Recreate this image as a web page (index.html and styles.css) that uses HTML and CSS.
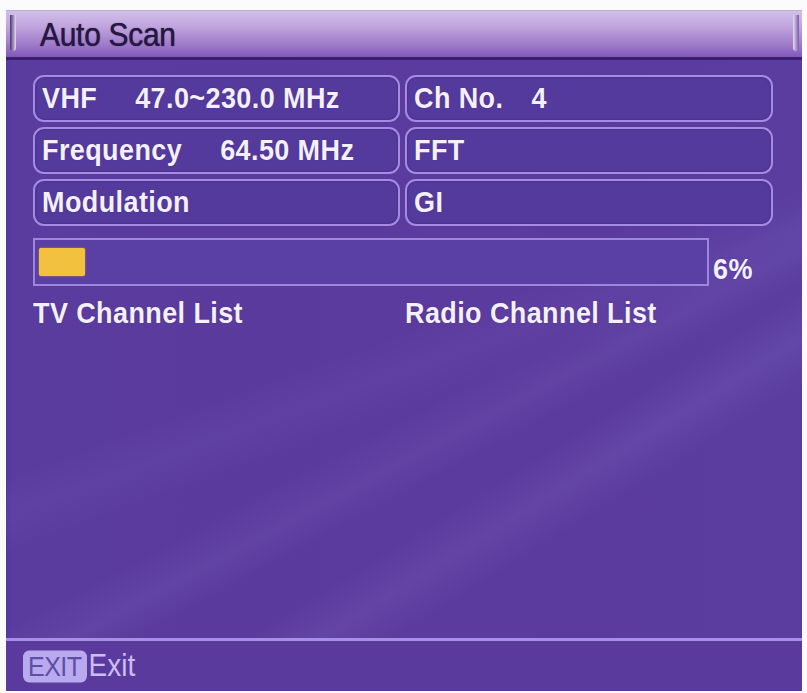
FILE: index.html
```html
<!DOCTYPE html>
<html lang="en">
<head>
<meta charset="UTF-8" />
<meta name="viewport" content="width=device-width, initial-scale=1" />
<title>Auto Scan</title>
<link rel="stylesheet" href="styles.css">
</head>
<body>

<div class="screen">
  <!-- Title bar -->
  <header class="titlebar">
    <span class="cap cap-left"></span>
    <h1>Auto Scan</h1>
    <span class="cap cap-right"></span>
  </header>

  <main class="content">
    <div class="info-grid">
      <div class="field"><span class="txt">VHF</span><span class="txt val-vhf">47.0~230.0 MHz</span></div>
      <div class="field"><span class="txt">Ch No.</span><span class="txt val-ch">4</span></div>
      <div class="field"><span class="txt">Frequency</span><span class="txt val-freq">64.50 MHz</span></div>
      <div class="field"><span class="txt">FFT</span></div>
      <div class="field"><span class="txt">Modulation</span></div>
      <div class="field"><span class="txt">GI</span></div>
    </div>

    <div class="progress-row">
      <div class="progress">
        <div class="progress-fill" style="width: 7%"></div>
      </div>
      <span class="txt percent">6%</span>
    </div>

    <div class="lists">
      <div class="txt list-title">TV Channel List</div>
      <div class="txt list-title">Radio Channel List</div>
    </div>
  </main>

  <footer class="footer">
    <span class="key">EXIT</span>
    <span class="key-label">Exit</span>
  </footer>
</div>

</body>
</html>
```

FILE: styles.css
```css
body {
  margin: 0;
  padding: 0;
  background: #fbfbfd;
  font-family: "Liberation Sans", Arial, sans-serif;
}
.screen {
  margin: 10px 5px 3px 6px;
  height: 680px;
  display: flex;
  flex-direction: column;
  background:
    linear-gradient(152deg, transparent 56%, rgba(190, 170, 255, 0.07) 60%, transparent 63%),
    linear-gradient(148deg, transparent 66%, rgba(190, 170, 255, 0.09) 70%, transparent 74%),
    linear-gradient(160deg, transparent 48%, rgba(170, 150, 240, 0.06) 52%, transparent 56%),
    linear-gradient(90deg, #4e3aa0 0px, #5a3c9e 6px, #5b3b9d 60%, #5a3d9f 100%);
  border-top: 1px solid #b8b4c8;
  overflow: hidden;
}

/* title bar */
.titlebar {
  height: 46px;
  display: flex;
  align-items: center;
  background: linear-gradient(180deg, #d2bfea 0%, #c0a3dd 35%, #a07ccb 72%, #8258bb 100%);
  border-bottom: 3px solid #3c1f6c;
  position: relative;
}
.titlebar h1 {
  margin: 2px 0 0 34px;
  font-size: 30px;
  font-weight: normal;
  color: #261842;
  transform: scaleY(1.1);
  letter-spacing: -0.3px;
  text-shadow: 0 0 1px #261842;
}
.cap {
  position: absolute;
  top: 4px;
  width: 6px;
  height: 36px;
  background: linear-gradient(90deg, #4a3270, #e6dcf4);
  border-radius: 0 0 3px 3px;
}
.cap-left { left: 4px; }
.cap-right { right: 3px; background: linear-gradient(90deg, #e6dcf4, #7a5aa8); }

/* content */
.content {
  flex: 1;
  padding: 15px 29px 0 27px;
}
.txt {
  color: #f4f0ff;
  font-size: 27px;
  font-weight: bold;
  letter-spacing: 0.4px;
  display: inline-block;
  transform: scaleY(1.12);
  text-shadow: 0 0 1px rgba(40, 20, 90, 0.6);
}
.info-grid {
  display: grid;
  grid-template-columns: 367px 368px;
  column-gap: 5px;
  row-gap: 5px;
}
.field {
  height: 43px;
  border: 2px solid #a68be2;
  border-radius: 11px;
  background: #553a9e;
  display: flex;
  align-items: center;
  padding-left: 7px;
  box-shadow: inset 0 0 2px rgba(30, 10, 80, 0.5);
}
.val-vhf { margin-left: 38px; }
.val-ch { margin-left: 28px; }
.val-freq { margin-left: 38px; }

.progress-row {
  display: flex;
  align-items: flex-end;
  margin-top: 12px;
}
.progress {
  width: 664px;
  height: 28px;
  border: 2px solid #9e86dc;
  background: #5a40a4;
  padding: 8px 4px;
  display: flex;
}
.progress-fill {
  height: 28px;
  background: #f2c23e;
  border-radius: 2px;
  box-shadow: 0 0 2px #c89a20;
}
.percent {
  margin-left: 4px;
  margin-bottom: 1px;
}

.lists {
  display: grid;
  grid-template-columns: 372px 1fr;
  margin-top: 12px;
}

/* footer */
.footer {
  height: 50px;
  border-top: 3px solid #a590e4;
  display: flex;
  align-items: center;
  padding-left: 17px;
  background: #5a3a9c;
}
.key {
  background: #b9a9ef;
  color: #5e4ea6;
  font-size: 25px;
  padding: 0 5px;
  border-radius: 6px;
  transform: scaleY(1.1);
  letter-spacing: -0.5px;
}
.key-label {
  color: #cbbdf7;
  font-size: 28px;
  margin-left: 2px;
  transform: scaleY(1.1);
  display: inline-block;
}
```
